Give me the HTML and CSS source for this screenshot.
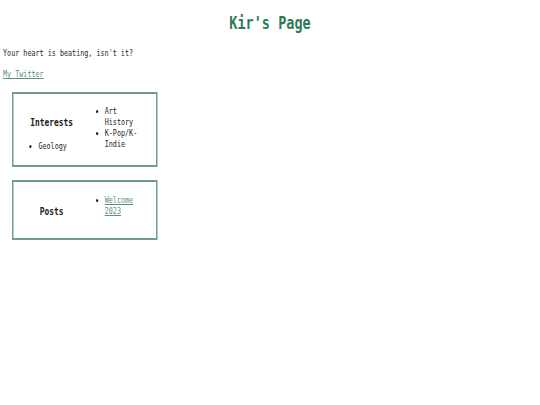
FILE: index.html
```html
<!DOCTYPE html>
<html lang="en">
<head>
<meta charset="utf-8">
<title>Kir's Page</title>
<link rel="stylesheet" href="styles.css">
</head>
<body>
<div class="page">
  <h1 class="title">Kir's Page</h1>
  <div class="content">
    <p class="intro">Your heart is beating, isn't it?</p>
    <p class="links"><a href="#">My Twitter</a></p>
    <section class="box box-interests">
      <div class="col-main">
        <h3 class="box-title">Interests</h3>
        <ul class="list list-main">
          <li>Geology</li>
        </ul>
      </div>
      <ul class="list list-side">
        <li>Art History</li>
        <li>K-Pop/K-Indie</li>
      </ul>
    </section>
    <section class="box box-posts">
      <div class="col-main">
        <h3 class="box-title">Posts</h3>
      </div>
      <ul class="list list-side">
        <li><a href="#">Welcome 2023</a></li>
      </ul>
    </section>
  </div>
</div>
</body>
</html>
```
FILE: styles.css
```css
html, body {
  margin: 0;
  padding: 0;
  background: #ffffff;
}

body {
  font-family: "DejaVu Sans Mono", monospace;
  color: #1e1e1e;
}

.page {
  width: 540px;
}

/* Condensed monospace look: text blocks are compressed horizontally. */
.title {
  margin: 12.3px 0 14.5px;
  font-size: 18px;
  line-height: 21px;
  font-weight: bold;
  text-align: center;
  color: #2f7a55;
  transform: scaleX(0.75);
  transform-origin: 50% 0;
}

.content {
  padding: 0 4px;
  font-size: 9px;
  line-height: 10.5px;
  transform: scaleX(0.75);
  transform-origin: 0 0;
}

.intro {
  margin: 0;
}

.links {
  margin: 11.2px 0 0;
}

a {
  color: #5f8f76;
  text-decoration: underline;
}

.box {
  display: grid;
  grid-template-columns: 79.4px 79.4px;
  column-gap: 9px;
  align-items: start;
  width: max-content;
  margin: 12px 0 0 12px;
  padding: 12.5px 11.2px;
  border: 2px solid #709d87;
}

.box-interests {
  height: 46.5px;
}

.box-posts {
  margin-top: 13px;
  height: 30.5px;
}

.box-title {
  margin: 9.7px 0 0;
  font-size: 10.5px;
  line-height: 12.5px;
  font-weight: bold;
  text-align: center;
  color: #1a1a1a;
}

.list {
  margin: 0;
  padding-left: 22px;
  line-height: 11px;
}

.list-main {
  margin-top: 12.5px;
}
```
